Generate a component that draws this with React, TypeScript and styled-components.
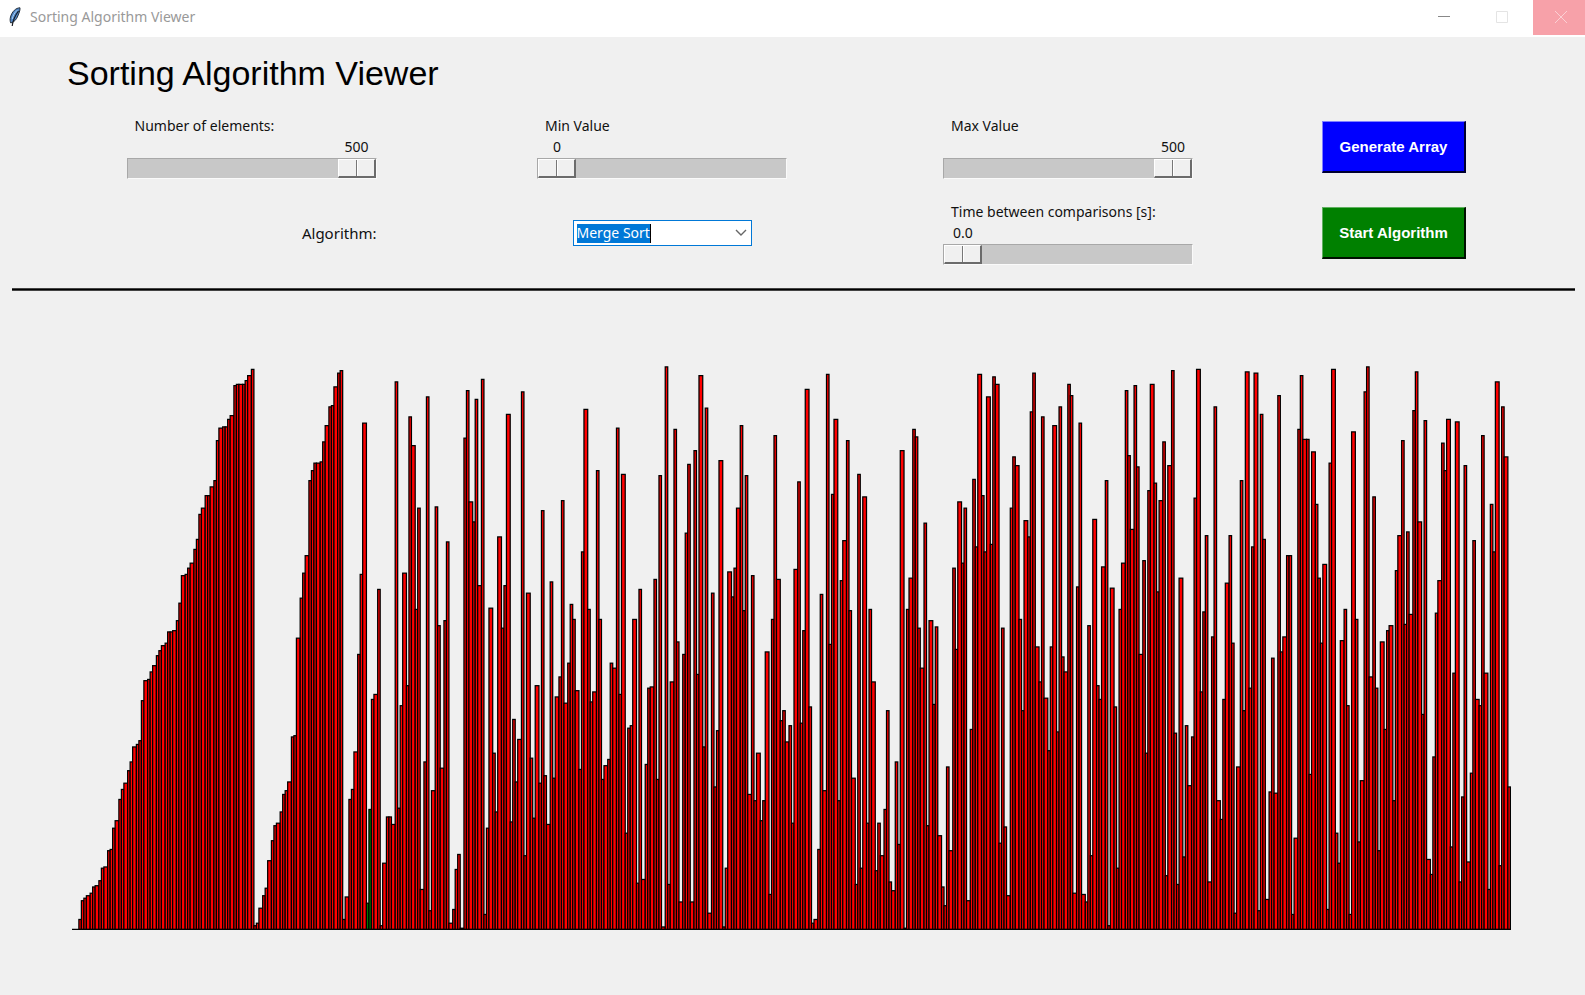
import React, { useState } from 'react';
import styled, { createGlobalStyle } from 'styled-components';

const GlobalStyle = createGlobalStyle`
  *, *::before, *::after { box-sizing: border-box; }
  body { margin: 0; background: #f0f0f0; }
`;

const UI_FONT = '"Segoe UI", "Noto Sans", "Open Sans", sans-serif';
const HEADING_FONT = '"Liberation Sans", Arial, sans-serif';

/* Free space above each of the 500 bars, on a 0 (ceiling) to 1513 (floor) scale. */
const FLOOR = 1513;
const CLEARANCE = [
  1513, 1513, 1487, 1438, 1430, 1424, 1417, 1401, 1398, 1386,
  1352, 1349, 1307, 1304, 1248, 1229, 1173, 1147, 1130, 1098,
  1075, 1036, 1029, 1020, 914, 862, 859, 840, 823, 797,
  784, 771, 765, 735, 735, 732, 706, 660, 588, 585,
  569, 556, 520, 494, 428, 412, 379, 379, 356, 340,
  236, 202, 200, 200, 180, 170, 91, 88, 88, 88,
  78, 65, 49, 1503, 1496, 1458, 1425, 1405, 1333, 1281,
  1242, 1235, 1206, 1160, 1150, 1127, 1010, 1007, 751, 646,
  581, 536, 340, 314, 294, 294, 291, 238, 196, 147,
  144, 95, 58, 52, 1487, 1427, 1173, 1147, 1049, 794,
  585, 189, 1444, 1199, 912, 899, 624, 1503, 1339, 1218,
  1218, 1238, 82, 1196, 928, 581, 876, 173, 248, 676,
  411, 1409, 1075, 121, 1464, 1150, 408, 718, 1091, 706,
  500, 1496, 1461, 1356, 1317, 1509, 228, 104, 395, 447,
  127, 615, 74, 1473, 1248, 673, 1052, 1206, 487, 725,
  615, 167, 1232, 964, 1127, 1016, 108, 1320, 633, 1065,
  1222, 876, 1130, 418, 1111, 1238, 604, 1117, 905, 853,
  392, 922, 817, 663, 703, 889, 1095, 525, 154, 676,
  918, 892, 314, 703, 1121, 1085, 1068, 817, 830, 202,
  899, 324, 1261, 987, 980, 703, 1392, 624, 1382, 1082,
  882, 879, 598, 1121, 327, 1506, 42, 1395, 866, 206,
  761, 1441, 794, 477, 297, 1441, 262, 846, 65, 1036,
  150, 1470, 633, 1140, 993, 288, 1506, 1353, 578, 643,
  569, 412, 196, 680, 327, 1160, 588, 1176, 1052, 1229,
  1176, 788, 1421, 703, 222, 598, 967, 941, 1022, 980,
  1235, 572, 343, 973, 732, 101, 931, 1496, 1487, 1304,
  637, 1150, 62, 768, 376, 180, 1176, 601, 497, 236,
  680, 1117, 1395, 324, 1353, 382, 1235, 677, 866, 1359,
  1235, 1320, 1199, 941, 1388, 1412, 1075, 1291, 262, 1509,
  677, 594, 206, 226, 725, 830, 451, 1242, 706, 925,
  722, 1268, 1402, 1451, 1088, 1307, 569, 781, 395, 556,
  411, 1438, 990, 337, 513, 62, 379, 526, 121, 507,
  69, 88, 1287, 725, 1245, 1425, 412, 278, 301, 703,
  941, 444, 487, 160, 58, 774, 866, 173, 908, 1046,
  774, 196, 997, 147, 801, 840, 88, 118, 1418, 618,
  190, 1421, 1441, 718, 1320, 441, 876, 912, 565, 340,
  1503, 620, 931, 1353, 677, 556, 104, 275, 467, 91,
  304, 794, 549, 1052, 366, 88, 346, 630, 392, 238,
  1372, 301, 52, 999, 1395, 594, 1323, 980, 1137, 1010,
  386, 49, 892, 683, 484, 1388, 748, 147, 1176, 1225,
  912, 607, 484, 765, 1470, 1088, 340, 941, 55, 882,
  513, 58, 1464, 167, 494, 1435, 1153, 804, 1156, 118,
  788, 748, 536, 536, 1473, 1274, 206, 65, 232, 232,
  1108, 265, 402, 594, 765, 559, 1461, 294, 49, 1261,
  1339, 758, 676, 928, 1473, 213, 703, 1284, 1124, 108,
  42, 853, 382, 882, 1307, 761, 990, 732, 719, 1176,
  575, 484, 236, 716, 474, 690, 157, 56, 447, 951,
  183, 1330, 1369, 1062, 686, 601, 242, 314, 180, 1297,
  843, 186, 1388, 1166, 301, 1336, 1104, 497, 912, 928,
  222, 843, 1408, 402, 526, 82, 1346, 147, 278, 1140,
];
const VALUES = CLEARANCE.map((space) => Math.round((FLOOR - space) / 3.267));
const COMPARED = [102, 103];

const CHART_HEIGHT = 452;
const BAR_PITCH = 2.3;

const TitleBar = styled.header`
  display: flex;
  height: 37px;
  padding-left: 8px;
  background: #fff;
`;

const WindowName = styled.div`
  display: flex;
  flex: 1;
  align-items: center;
  height: 34px;
  gap: 8px;
  font: 14px/20px ${UI_FONT};
  color: #999;
`;

const WindowButton = styled.button<{ $tone: string }>`
  display: flex;
  align-items: center;
  justify-content: center;
  width: 58px;
  height: 35px;
  padding: 0 0 1px;
  border: 0;
  background: transparent;
  color: ${(p) => p.$tone};
`;

const CloseButton = styled(WindowButton)`
  width: 52px;
  margin-left: 2px;
  padding-left: 4px;
  background: #f7a1a9;
`;

const Heading = styled.h1`
  margin: 0;
  padding: 15px 67px 0;
  font: 400 34px/42px ${HEADING_FONT};
  color: #000;
`;

const Controls = styled.section`
  display: grid;
  grid-template-columns: 411fr 410fr 402fr 250fr;
  row-gap: 22px;
  justify-items: center;
  align-items: center;
  margin-top: 21px;
  padding: 0 66px 0 46px;
`;

const Field = styled.div`
  display: flex;
  flex-direction: column;
  width: 250px;
  font: 14px/22px ${UI_FONT};
  color: #111;
`;

const FieldLabel = styled.label`
  height: 21px;
  padding-left: 8px;
`;

const Readout = styled.output`
  width: 40px;
  height: 22px;
  text-align: center;
`;

const Slider = styled.input`
  appearance: none;
  display: block;
  width: 100%;
  height: 21px;
  margin: 0;
  border: 1px solid;
  border-color: #a8a8a8 #fafafa #fafafa #a8a8a8;
  background: #c8c8c8;

  &::-webkit-slider-thumb {
    appearance: none;
    width: 38px;
    height: 19px;
    border: solid;
    border-width: 1px 2px 2px 1px;
    border-color: #fff #6b6b6b #6b6b6b #fff;
    background: linear-gradient(90deg, #f0f0f0 17px, #777 17px 18px, #fff 18px 19px, #f0f0f0 19px);
  }
`;

const AlgorithmLabel = styled.label`
  width: 250px;
  text-align: right;
  font: 15px/20px ${UI_FONT};
  color: #111;
`;

const ComboBox = styled.div`
  display: grid;
  width: 179px;
  align-items: center;

  > * { grid-area: 1 / 1; }
  > svg { justify-self: end; margin-right: 5px; pointer-events: none; }
`;

const Select = styled.select`
  appearance: none;
  width: 100%;
  height: 26px;
  padding: 0 24px 0 3px;
  border: 1px solid #0078d7;
  border-radius: 0;
  background:
    linear-gradient(#000, #000) 76px 3px / 1px 19px no-repeat,
    linear-gradient(#0078d7, #0078d7) 3px 3px / 73px 19px no-repeat,
    #fff;
  font: 14px/20px ${UI_FONT};
  color: #fff;

  option { color: #000; }
`;

const ActionButton = styled.button<{ $color: string; $light: string; $dark: string }>`
  width: 144px;
  height: 52px;
  padding: 0;
  border: solid;
  border-width: 1px 2px 2px 1px;
  border-color: ${(p) => `${p.$light} ${p.$dark} ${p.$dark} ${p.$light}`};
  background: ${(p) => p.$color};
  font: 700 15px/20px ${HEADING_FONT};
  color: #fff;
`;

const Divider = styled.hr`
  height: 3px;
  margin: 23px 10px 0 12px;
  border: solid #444;
  border-width: 1px 0;
  background: #000;
`;

const Chart = styled.main`
  padding: 74px 74px 0 72px;

  svg { display: block; width: 100%; height: auto; }
`;

interface ScaleProps {
  id: string;
  label: string;
  max: number;
  step?: number;
  initial: number;
  digits?: number;
}

function Scale({ id, label, max, step = 1, initial, digits = 0 }: ScaleProps) {
  const [value, setValue] = useState(initial);
  return (
    <Field>
      <FieldLabel htmlFor={id}>{label}</FieldLabel>
      <Readout htmlFor={id} style={{ marginLeft: `calc((100% - 40px) * ${value / max})` }}>
        {value.toFixed(digits)}
      </Readout>
      <Slider
        id={id}
        type="range"
        min={0}
        max={max}
        step={step}
        value={value}
        onChange={(e) => setValue(Number(e.target.value))}
      />
    </Field>
  );
}

function Feather() {
  return (
    <svg width="14" height="20" viewBox="0 0 14 20" aria-hidden="true">
      <path d="M12 .8C8 .8 4 4.500 2.500 10c-.6 2.200-.5 4.500.3 6 3.200-.8 5.700-3.500 7-7 1-2.800 2.400-5 2.200-8.200z" fill="#4f86c6" stroke="#26303c" />
      <path d="M9.500 3C6.500 5.500 4.800 9 4.300 12" fill="none" stroke="#a9cdf0" />
      <path d="M10.500 4C7.500 8 5 12 4.200 19" fill="none" stroke="#16191f" strokeWidth="1.200" />
    </svg>
  );
}

/* Bar edges sit on whole chart units, so bars are two or three units wide. */
const edge = (index: number) => Math.floor(index * BAR_PITCH + 0.49);

function Bars() {
  return (
    <svg viewBox={`0 0 1151 ${CHART_HEIGHT}`} role="img" aria-label="Array values">
      <g stroke="#000" strokeWidth="1">
        {VALUES.map((value, i) => (
          <rect
            key={i}
            x={edge(i) + 0.5}
            y={CHART_HEIGHT - 0.5 - value}
            width={edge(i + 1) - edge(i)}
            height={value}
            fill={COMPARED.includes(i) ? '#008000' : '#f00'}
          />
        ))}
        <path d={`M0 ${CHART_HEIGHT - 0.5}H1151`} />
      </g>
    </svg>
  );
}

export default function App() {
  return (
    <>
      <GlobalStyle />
      <TitleBar>
        <WindowName>
          <Feather />
          Sorting Algorithm Viewer
        </WindowName>
        <WindowButton aria-label="Minimize" $tone="#888">
          <svg width="12" height="12" viewBox="0 0 12 12"><path d="M0 5.5h12" stroke="currentColor" /></svg>
        </WindowButton>
        <WindowButton aria-label="Maximize" $tone="#e4e4e4">
          <svg width="12" height="12" viewBox="0 0 12 12"><path d="M.5.5h11v11H.5z" fill="none" stroke="currentColor" /></svg>
        </WindowButton>
        <CloseButton aria-label="Close" $tone="#fbd0d4">
          <svg width="12" height="12" viewBox="0 0 12 12"><path d="M0 0l12 12M12 0L0 12" stroke="currentColor" /></svg>
        </CloseButton>
      </TitleBar>
      <Heading>Sorting Algorithm Viewer</Heading>
      <Controls>
        <Scale id="count" label="Number of elements:" max={500} initial={500} />
        <Scale id="min" label="Min Value" max={500} initial={0} />
        <Scale id="max" label="Max Value" max={500} initial={500} />
        <ActionButton $color="#0000ff" $light="#8080ff" $dark="#000030">Generate Array</ActionButton>
        <AlgorithmLabel htmlFor="algorithm">Algorithm:</AlgorithmLabel>
        <ComboBox>
          <Select id="algorithm" defaultValue="Merge Sort">
            <option>Merge Sort</option>
            <option>Quick Sort</option>
            <option>Bubble Sort</option>
          </Select>
          <svg width="12" height="8" viewBox="0 0 12 8" aria-hidden="true">
            <path d="M1 1l5 5 5-5" fill="none" stroke="#666" strokeWidth="1.4" />
          </svg>
        </ComboBox>
        <Scale id="delay" label="Time between comparisons [s]:" max={1} step={0.1} initial={0} digits={1} />
        <ActionButton $color="#008000" $light="#60b060" $dark="#001000">Start Algorithm</ActionButton>
      </Controls>
      <Divider />
      <Chart>
        <Bars />
      </Chart>
    </>
  );
}
